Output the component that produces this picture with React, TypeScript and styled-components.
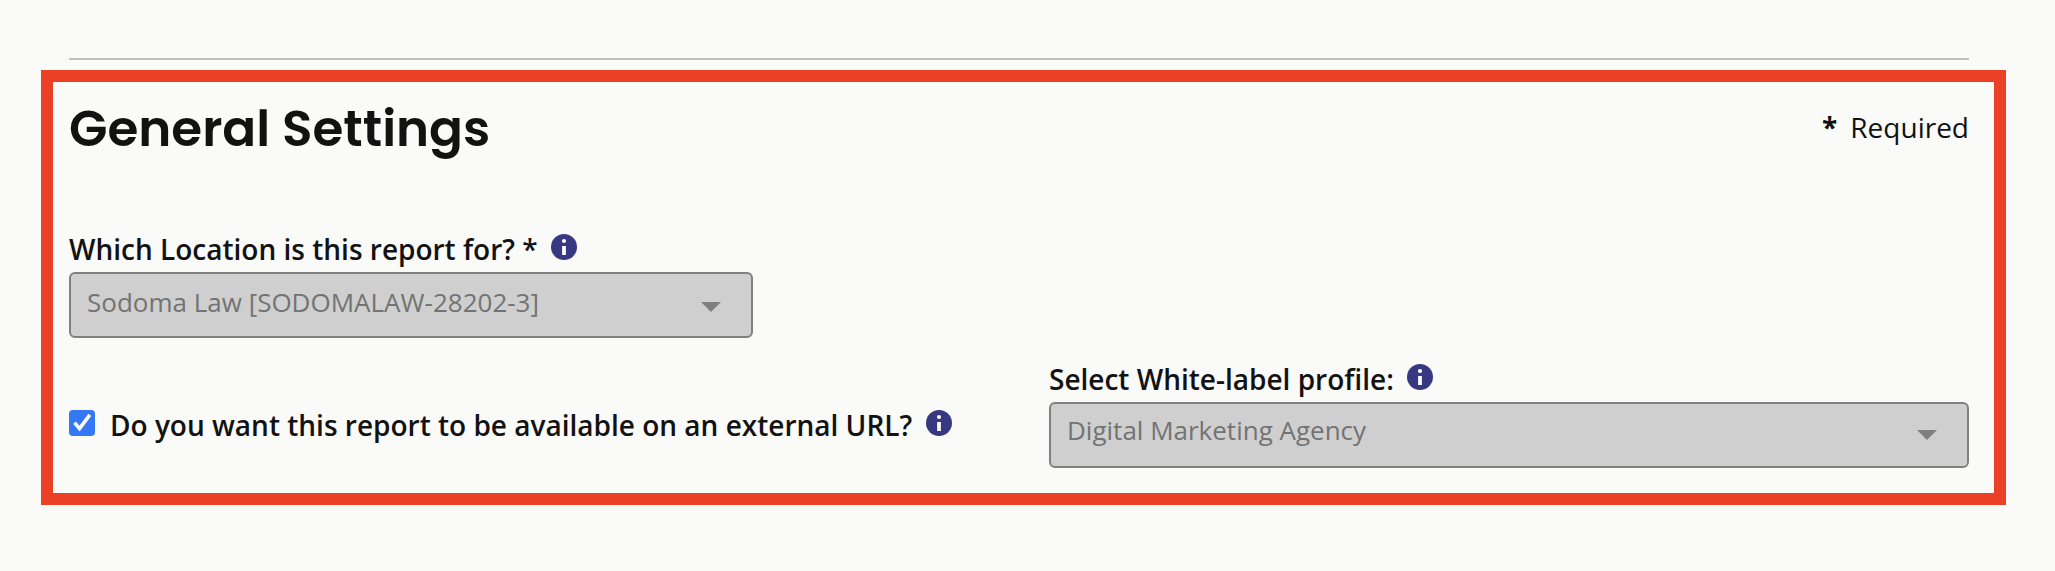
import React from 'react';
import styled, { createGlobalStyle } from 'styled-components';

const GlobalStyle = createGlobalStyle`
  * { box-sizing: border-box; }
  body { margin: 0; background: #fafaf8; color: #121212; font-family: 'Open Sans', 'Noto Sans', sans-serif; }
`;

const Page = styled.main`
  height: 571px;
  padding: 58px 49px 0 41px;
  background: #fafaf8;
`;

const Divider = styled.hr`
  height: 2px;
  margin: 0 37px 10px 28px;
  border: 0;
  background: #bfbfbf;
`;

const Panel = styled.section`
  height: 435px;
  border: 12px solid #ea4025;
  padding: 16px 25px 0 16px;
`;

const Header = styled.header`
  display: flex;
  justify-content: space-between;
  height: 132px;
`;

const Title = styled.h1`
  margin: 1px 0 0;
  font: 600 50px/60px Poppins, Inter, sans-serif;
  white-space: nowrap;
`;

const Required = styled.p`
  display: flex;
  gap: 13px;
  margin: 10px 0 0;
  font-size: 28px;
  line-height: 38px;
`;

const Row = styled.div`
  display: grid;
  grid-template-columns: 980px 920px;
  height: 108px;
  margin-bottom: 22px;
`;

const Field = styled.div<{ $width: number }>`
  display: flex;
  flex-direction: column;
  gap: 4px;
  width: ${(p) => p.$width}px;
`;

const LabelLine = styled.div`
  display: flex;
  align-items: flex-start;
  height: 38px;
`;

const LabelText = styled.label<{ $width: number }>`
  width: ${(p) => p.$width}px;
  font-size: 28px;
  font-weight: 600;
  line-height: 38px;
  white-space: nowrap;
`;

const InfoSvg = styled.svg`
  flex: none;
  width: 26px;
  height: 26px;
  margin-top: 4px;
`;

const SelectBox = styled.div<{ $top: number }>`
  display: flex;
  justify-content: space-between;
  height: 66px;
  padding: ${(p) => p.$top}px 30px 0 16px;
  border: 2px solid #808080;
  border-radius: 6px;
  background: #cfcfcf;
  color: #737373;
  font-size: 26px;
  line-height: 36px;
  white-space: nowrap;
`;

const Caret = styled.svg`
  width: 20px;
  height: 10px;
  margin-top: 18px;
`;

const CheckLine = styled(LabelLine)`
  margin-top: 46px;
`;

const Checkbox = styled.svg`
  flex: none;
  width: 26px;
  height: 26px;
  margin: 4px 15px 0 0;
`;

const InfoIcon = () => (
  <InfoSvg viewBox="0 0 26 26" aria-label="More information">
    <circle cx="13" cy="13" r="13" fill="#383882" />
    <circle cx="13" cy="7" r="2.1" fill="#fafaf8" />
    <rect x="11.1" y="12" width="3.8" height="9" fill="#fafaf8" />
  </InfoSvg>
);

const Select = ({ value, top }: { value: string; top: number }) => (
  <SelectBox $top={top} role="combobox" aria-disabled="true">
    <span>{value}</span>
    <Caret viewBox="0 0 20 10">
      <path d="M0 0h20L10 10z" fill="#808080" />
    </Caret>
  </SelectBox>
);

export default function App() {
  return (
    <Page>
      <GlobalStyle />
      <Divider />
      <Panel>
        <Header>
          <Title>General Settings</Title>
          <Required>
            <b>*</b>
            <span>Required</span>
          </Required>
        </Header>
        <Row>
          <Field $width={684}>
            <LabelLine>
              <LabelText $width={482}>Which Location is this report for? *</LabelText>
              <InfoIcon />
            </LabelLine>
            <Select value="Sodoma Law [SODOMALAW-28202-3]" top={10} />
          </Field>
        </Row>
        <Row>
          <CheckLine>
            <Checkbox viewBox="0 0 26 26" role="checkbox" aria-checked="true">
              <rect width="26" height="26" rx="4" fill="#3478f6" />
              <path d="M5.6 12.6l4.9 6L20.8 4.9" fill="none" stroke="#fff" strokeWidth="3.5" />
            </Checkbox>
            <LabelText $width={816}>Do you want this report to be available on an external URL?</LabelText>
            <InfoIcon />
          </CheckLine>
          <Field $width={920}>
            <LabelLine>
              <LabelText $width={358}>Select White-label profile:</LabelText>
              <InfoIcon />
            </LabelLine>
            <Select value="Digital Marketing Agency" top={8} />
          </Field>
        </Row>
      </Panel>
    </Page>
  );
}
